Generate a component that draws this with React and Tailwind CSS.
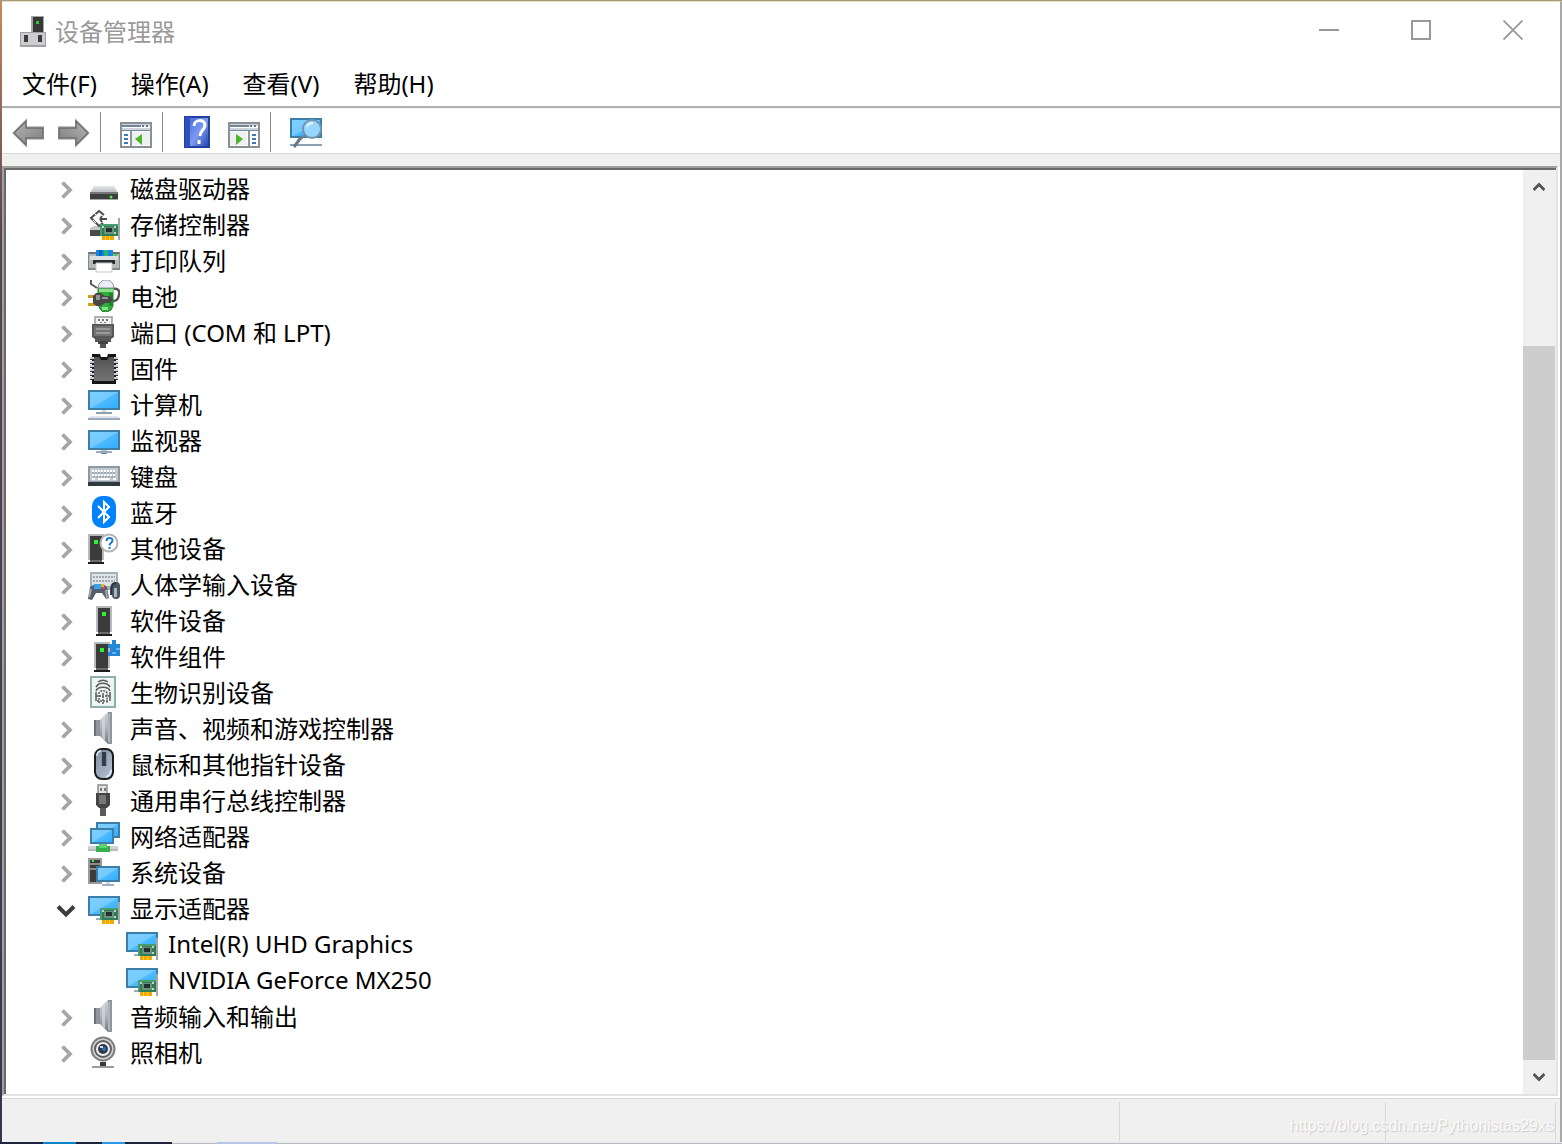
import { useState } from "react";

/* ---------- Icons ---------- */

function Icon({ children, className = "size-8 shrink-0" }) {
  return (
    <svg viewBox="0 0 32 32" className={className} aria-hidden="true">
      {children}
    </svg>
  );
}

function Gradients() {
  return (
    <svg className="absolute size-0" aria-hidden="true">
      <defs>
        <linearGradient id="screen" x1="0" y1="0" x2="1" y2="1">
          <stop offset="0" stopColor="#7fd0ff" />
          <stop offset="0.5" stopColor="#74caff" />
          <stop offset="0.52" stopColor="#4dbbff" />
          <stop offset="1" stopColor="#2fabff" />
        </linearGradient>
        <linearGradient id="steel" x1="0" y1="0" x2="0" y2="1">
          <stop offset="0" stopColor="#e6e8ea" />
          <stop offset="1" stopColor="#b4b8bc" />
        </linearGradient>
        <linearGradient id="dark" x1="0" y1="0" x2="0" y2="1">
          <stop offset="0" stopColor="#525252" />
          <stop offset="1" stopColor="#747474" />
        </linearGradient>
        <linearGradient id="cone" x1="0" y1="0" x2="0" y2="1">
          <stop offset="0" stopColor="#c9ced2" />
          <stop offset="0.5" stopColor="#aeb5bb" />
          <stop offset="1" stopColor="#6f7880" />
        </linearGradient>
        <linearGradient id="mouse" x1="0" y1="0" x2="1" y2="1">
          <stop offset="0" stopColor="#7c8ca0" />
          <stop offset="1" stopColor="#b9c7d6" />
        </linearGradient>
        <linearGradient id="arrow" x1="0" y1="0" x2="1" y2="1">
          <stop offset="0" stopColor="#b5b5b5" />
          <stop offset="1" stopColor="#7d7d7d" />
        </linearGradient>
        <linearGradient id="book" x1="0" y1="0" x2="1" y2="1">
          <stop offset="0" stopColor="#4a72e0" />
          <stop offset="0.5" stopColor="#7d9af0" />
          <stop offset="1" stopColor="#2646b4" />
        </linearGradient>
      </defs>
    </svg>
  );
}

function Screen({ x = 0, y = 2, w = 32, h = 20 }) {
  return <rect x={x + 1} y={y + 1} width={w - 2} height={h - 2} fill="url(#screen)" stroke="#3b7ea8" strokeWidth="2" />;
}

function Card() {
  return (
    <g shapeRendering="crispEdges">
      <path d="M14 28h12v4H14z" fill="#f5a800" />
      <path d="M17 28h1v4h-1zM21 28h1v4h-1z" fill="#ffd34d" />
      <path d="M12 16h18v12H12z" fill="#2f7d55" />
      <path d="M12 16h18v2H12zM12 16h2v12h-2z" fill="#4c9a72" />
      <path d="M16 19h10v7H16z" fill="#6b9080" />
      <path d="M18 20h6v4h-6z" fill="#26302c" />
      <path d="M14 18h2v2h-2zM26 18h2v2h-2zM26 24h2v2h-2z" fill="#b9d8c8" />
      <path d="M30 10h2v22h-2z" fill="#a6a6a6" />
    </g>
  );
}

function Tower({ x = 8 }) {
  return (
    <g shapeRendering="crispEdges">
      <path d={`M${x} 2h16v26h-16z`} fill="#b7babe" />
      <path d={`M${x + 2} 4h12v24h-12z`} fill="#3b3b3b" />
      <path d={`M${x + 2} 28h12v2h-12z`} fill="#6b6b6b" />
      <path d={`M${x} 30h16v2h-16z`} fill="#1d1d1d" />
      <path d={`M${x + 6} 8h4v4h-4z`} fill="#2df52d" />
    </g>
  );
}

function DiskIcon() {
  return (
    <Icon>
      <path d="M6 14h20l4 7H2z" fill="url(#steel)" />
      <path d="M2 20h28v8H2z" fill="#3d3d3d" />
      <path d="M2 20h28v2H2z" fill="#777" />
      <path d="M2 27h28v1H2z" fill="#a5a5a5" />
      <circle cx="23" cy="25" r="1.5" fill="#3df53d" />
    </Icon>
  );
}

function StorageIcon() {
  return (
    <Icon>
      <path d="M2 20l4-2h8v4H2z" fill="#c5c8ca" />
      <path d="M2 22h10v6H2z" fill="#4a4a4a" />
      <path d="M16 7l-5-4-8 7 8 8 4-3M12 11h7M12 11l2-3M12 11l2 3" fill="none" stroke="#4b4b4b" strokeWidth="2" />
      <path d="M6 5l3 3M5 12l3 3" stroke="#fff" strokeWidth="1" />
      <Card />
    </Icon>
  );
}

function PrinterIcon() {
  return (
    <Icon>
      <path d="M8 6h17v6H8z" fill="#1686e0" />
      <path d="M16 6h4v6h-4z" fill="#22b573" />
      <path d="M11 6h3v6h-3z" fill="#0a63c4" />
      <path d="M0 8h8v4h17V8h7v18H0z" fill="#b6babd" />
      <path d="M0 8h8v2H0zM25 8h7v2h-7z" fill="#6c6f72" />
      <path d="M2 12h28v4H2z" fill="#dcdfe1" />
      <path d="M0 24h32v2H0zM0 8h1v18H0zM31 8h1v18h-1z" fill="#85898c" />
      <path d="M5 16h22v4H5z" fill="#2c2c2c" />
      <path d="M8 19h16v9H8z" fill="#fff" stroke="#c2c6c9" />
      <path d="M26 10h3v2h-3z" fill="#30e030" />
    </Icon>
  );
}

function BatteryIcon() {
  return (
    <Icon>
      <path d="M10 7h15v19l-2 4-4 2h-4l-3-3-2-5z" fill="#2fae3c" stroke="#287a30" strokeWidth="1" />
      <path d="M10 8l1-4 4-4h6l4 4 1 4z" fill="#eceef8" stroke="#8a8ca0" strokeWidth="1" />
      <path d="M11 9h14v3H11z" fill="#8fe08a" />
      <path d="M21 13h4v13h-4z" fill="#1d8a2a" />
      <path d="M14 27h6v3h-6z" fill="#8fe08a" />
      <path d="M3 0v4l6 4" fill="none" stroke="#5a5a5a" strokeWidth="2" />
      <path d="M26 9c4-1 6 2 5 6s-2 6-6 6" fill="none" stroke="#555" strokeWidth="2.500" />
      <path d="M0 15h7v3H0zM0 23h7v3H0z" fill="#d09c1a" />
      <path d="M5 16l3-3h5l4 3h5l3 3-3 4h-5l-4 3H8l-3-3z" fill="#484848" />
      <path d="M8 15h4v5H8zM14 17h6v2h-6z" fill="#959595" />
    </Icon>
  );
}

function PortIcon() {
  return (
    <Icon>
      <path d="M7 1h17v8H7z" fill="#f2f2f2" stroke="#9a9a9a" strokeWidth="1.5" />
      <path d="M10 3h2v2h-2zM14 3h2v2h-2zM18 3h2v2h-2zM12 6h2v1h-2zM16 6h2v1h-2z" fill="#777" />
      <path d="M4 8h22v13l-3 2v3H7v-3l-3-2z" fill="#585858" />
      <path d="M6 10h18v10H6z" fill="#747474" />
      <path d="M8 12h14v2H8zM8 16h14v2H8z" fill="#9a9a9a" />
      <path d="M10 25h10v3H10z" fill="#444" />
      <path d="M12 28h6v4h-6z" fill="#555" />
    </Icon>
  );
}

function FirmwareIcon() {
  const pins = [5, 9, 13, 17, 21, 25];
  return (
    <Icon>
      <path d="M4 2h8l1 3h6l1-3h8v30H4z" fill="#151515" />
      <path d="M6 5h5l2 3h6l2-3h5v24H6z" fill="url(#dark)" />
      {pins.map((y) => (
        <g key={y}>
          <path d={`M2 ${y}h4v2h-4zM26 ${y}h4v2h-4z`} fill="#c8d0dc" />
          <path d={`M2 ${y + 2}h3v1h-3zM27 ${y + 2}h3v1h-3z`} fill="#333" />
        </g>
      ))}
    </Icon>
  );
}

function ComputerIcon() {
  return (
    <Icon>
      <Screen />
      <path d="M14 22h4v2h-4z" fill="#d5dbe2" />
      <path d="M8 24h16v2H8z" fill="#8ea1b3" />
      <path d="M2 28h28l2 2H0z" fill="#e0e4e8" />
      <path d="M0 30h32v2H0z" fill="#9aaabb" />
    </Icon>
  );
}

function MonitorIcon() {
  return (
    <Icon>
      <Screen y={6} />
      <path d="M13 26h6v3h-6z" fill="#b8c4d0" />
      <path d="M8 27h16v2H8z" fill="#9aabbc" />
      <path d="M13 29h6v1h-6z" fill="#71879c" />
    </Icon>
  );
}

function KeyboardIcon() {
  return (
    <Icon>
      <path d="M0 6h32v17H0z" fill="#8d99a5" />
      <path d="M2 8h28v13H2z" fill="#c3cad1" />
      <path d="M4 11h24M4 15h24" stroke="#fff" strokeWidth="2" strokeDasharray="2 1" />
      <path d="M4 13h24M5 17h22" stroke="#7d8791" strokeWidth="1" strokeDasharray="2 1" />
      <path d="M4 19h3M10 19h12M25 19h3" stroke="#fff" strokeWidth="2" />
      <path d="M0 22h32v4H0z" fill="#2f3a40" />
    </Icon>
  );
}

function BluetoothIcon() {
  return (
    <Icon>
      <rect x="4" y="0" width="24" height="32" rx="10" fill="#0082fc" />
      <path d="M10 10l11 11-5 5V6l5 5-11 11" fill="none" stroke="#fff" strokeWidth="2" />
    </Icon>
  );
}

function UnknownIcon() {
  return (
    <Icon>
      <Tower x={0} />
      <circle cx="21" cy="11" r="8.500" fill="#fff" stroke="#b4b4b4" strokeWidth="2" />
      <path d="M18.500 9c0-4 6-4 6-.5 0 2-3 2.500-3 5M21.500 15v2" fill="none" stroke="#1e78c8" strokeWidth="2" />
    </Icon>
  );
}

function HidIcon() {
  return (
    <Icon>
      <path d="M2 4h28v18H2z" fill="#a4afb9" />
      <path d="M4 6h24v12H4z" fill="#dfe4e8" />
      <path d="M5 9h22M5 13h22" stroke="#8a959f" strokeWidth="1.500" strokeDasharray="2 1" />
      <path d="M0 31l2-12 5-3h8l4 3 2 11-3 1-4-6H8l-4 7z" fill="#54606c" />
      <path d="M1 29l2-8M18 22l1 8" stroke="#9facb8" strokeWidth="2" />
      <path d="M6 16h7v5H6z" fill="#35a2f0" />
      <path d="M13 16h3v3h-3z" fill="#f0b020" />
      <path d="M14 19h3v2h-3z" fill="#e04848" />
      <rect x="24" y="14" width="8" height="17" rx="4" fill="#4a545e" />
      <path d="M26 20h3v9h-3z" fill="#a9b5c0" />
      <path d="M28 15c-4 0-5 2-5 12" fill="none" stroke="#2f363c" strokeWidth="2" />
    </Icon>
  );
}

function SoftwareDeviceIcon() {
  return (
    <Icon>
      <Tower x={8} />
    </Icon>
  );
}

function SoftwareComponentIcon() {
  return (
    <Icon>
      <Tower x={6} />
      <path d="M20 4h4V0h4v4h4v12H20v-4h2V8h-2z" fill="#2387d6" />
      <path d="M24 12h4v2h-4zM28 8h4v2h-4z" fill="#65b0ee" />
    </Icon>
  );
}

function FingerprintIcon() {
  return (
    <Icon>
      <path d="M2 0h26v32H2z" fill="#8fb0aa" />
      <path d="M4 2h22v28H4z" fill="#eef5f3" />
      <g fill="none" stroke="#5a5a5a" strokeWidth="1.500">
        <path d="M10 6c3-2 7-2 10 0M8 11c3-5 11-5 14 0M8 15c2-5 12-5 14 0M8 16v9M22 16v9" />
        <path d="M11 27V17c1-3 7-3 8 0v10M15 28V17M8 20h14M9 25h12" strokeDasharray="2 1" />
      </g>
    </Icon>
  );
}

function SpeakerIcon() {
  return (
    <Icon>
      <path d="M6 8h6v16H6z" fill="#69737c" />
      <path d="M8 8h4v16H8z" fill="#8d97a0" />
      <path d="M12 8l8-8v32l-8-8z" fill="url(#cone)" />
      <path d="M14 6l3-3v26l-3-3z" fill="#d9dcdf" opacity="0.7" />
      <path d="M20 0h4v32h-4z" fill="#8d979f" />
      <path d="M20 2h2v28h-2z" fill="#adb5bb" />
    </Icon>
  );
}

function MouseIcon() {
  return (
    <Icon>
      <rect x="7" y="1" width="18" height="30" rx="7" fill="url(#mouse)" stroke="#1c1c1c" strokeWidth="2" />
      <path d="M9 8c0-4 2-5 4-5M23 22c0 4-2 6-5 7" fill="none" stroke="#e5ecf3" strokeWidth="1.500" />
      <path d="M13 2h6v16h-6z" fill="#8593a4" />
      <path d="M14 4h4v14h-4z" fill="#343c45" />
    </Icon>
  );
}

function UsbIcon() {
  return (
    <Icon>
      <path d="M10 1h9v9h-9z" fill="#e3e3e3" stroke="#8d8d8d" strokeWidth="1.500" />
      <path d="M12 4h2v3h-2zM16 4h2v3h-2z" fill="#777" />
      <path d="M8 9h14v12l-3 3h-8l-3-3z" fill="#454545" />
      <path d="M11 11h7v9h-7z" fill="#777" />
      <path d="M12 24h6v8h-6z" fill="#5a5a5a" />
    </Icon>
  );
}

function NetworkIcon() {
  return (
    <Icon>
      <Screen x={8} y={2} w={24} h={16} />
      <Screen x={2} y={8} w={24} h={16} />
      <path d="M0 26h30v4H0z" fill="#d0d3d5" />
      <path d="M0 29h30v2H0z" fill="#b8bbbd" />
      <path d="M8 26h14v6H8z" fill="#35b04a" />
      <path d="M11 24h8v4h-8z" fill="#5fcf70" />
    </Icon>
  );
}

function SystemIcon() {
  return (
    <Icon>
      <path d="M0 2h14v26H0z" fill="#9a9a9a" />
      <path d="M2 4h10v22H2z" fill="#3c3c3c" />
      <path d="M2 7h10v2H2zM2 12h6v2H2z" fill="#8b8b8b" />
      <path d="M4 4h2v2H4z" fill="#30f030" />
      <Screen x={8} y={10} w={24} h={16} />
      <path d="M18 26h4v2h-4z" fill="#cfd6dd" />
      <path d="M14 28h12v2H14z" fill="#9db0c2" />
    </Icon>
  );
}

function DisplayIcon() {
  return (
    <Icon>
      <Screen y={4} />
      <path d="M8 26h6v2H8z" fill="#9aabbc" />
      <Card />
    </Icon>
  );
}

function CameraIcon() {
  return (
    <Icon>
      <path d="M12 26h6v4h-6z" fill="#3b3b3b" />
      <path d="M4 30h22v2H4z" fill="#9b9b9b" />
      <circle cx="15" cy="13" r="11.500" fill="#d2d4d6" stroke="#7d7d7d" strokeWidth="2" />
      <circle cx="15" cy="13" r="8" fill="#f0f0f0" stroke="#5f5f5f" strokeWidth="2" />
      <circle cx="15" cy="13" r="5" fill="#303a48" />
      <circle cx="16" cy="13" r="2" fill="#2873b8" />
      <path d="M12 10h3v2h-3z" fill="#c8dcf0" />
    </Icon>
  );
}

function AppIcon() {
  return (
    <Icon>
      <path d="M13 0h13v17H13z" fill="#a5a5a5" />
      <path d="M15 1h10v16H15z" fill="#383838" />
      <path d="M18 5h3v3h-3z" fill="#2ec42e" />
      <path d="M2 16h26v15H2z" fill="#cbcdd1" />
      <path d="M2 16h26v1H2zM2 29h26v2H2zM2 16h1v15H2zM27 16h1v15h-1z" fill="#a0a0a0" />
      <path d="M6 19h4v7H6zM20 19h4v7h-4z" fill="#3c3c3c" />
    </Icon>
  );
}

function ArrowIcon({ flip }) {
  return (
    <Icon className={flip ? "size-8 -scale-x-100" : "size-8"}>
      <path d="M0 17L15 2v8h17v14H15v8z" fill="#c4c4c4" />
      <path d="M2 17L14 5v7h17v10H14v7z" fill="url(#arrow)" stroke="#6c6c6c" strokeWidth="1.500" />
    </Icon>
  );
}

function PaneIcon({ right }) {
  return (
    <Icon>
      <path d="M1 7h30v24H1z" fill="#fff" stroke="#8a8f94" strokeWidth="2" />
      <path d="M2 8h28v2H2zM2 12h28v3H2z" fill="#cdd3d9" />
      <path d="M2 9h19v2H2zM2 14h28v1H2z" fill="#72879c" />
      <path d="M22 9h2v2h-2zM26 9h2v2h-2z" fill="#5f788f" />
      {right ? (
        <g>
          <path d="M2 16h17v13H2z" fill="#eef0f2" />
          <path d="M20 15h2v15h-2z" fill="#8e979f" />
          <path d="M24 18h4v2h-4zM24 22h4v2h-4zM24 26h4v2h-4z" fill="#3f78b5" />
          <path d="M8 18l7 5-7 6z" fill="#4cb52a" />
        </g>
      ) : (
        <g>
          <path d="M12 16h18v13H12z" fill="#eef0f2" />
          <path d="M10 15h2v15h-2z" fill="#8e979f" />
          <path d="M4 18h4v2H4zM4 22h4v2H4zM4 26h4v2H4z" fill="#3f78b5" />
          <path d="M22 18l-7 5 7 6z" fill="#4cb52a" />
        </g>
      )}
    </Icon>
  );
}

function HelpIcon() {
  return (
    <Icon>
      <path d="M2 0h26v32H2z" fill="#2140a0" />
      <path d="M3 1h5v30H3z" fill="#3050b8" />
      <path d="M8 2h18v28H8z" fill="url(#book)" />
      <path d="M12 10c0-7 11-7 11-1 0 5-5 5-5 11M17 24v4" fill="none" stroke="#fff" strokeWidth="3" />
    </Icon>
  );
}

function ScanIcon() {
  return (
    <Icon>
      <Screen y={2} />
      <path d="M0 28h32v2H0z" fill="#8ba0b4" />
      <path d="M12 20l-8 11" stroke="#66788a" strokeWidth="3" />
      <circle cx="22" cy="13" r="9" fill="#a6dcff" fillOpacity="0.85" stroke="#7594ac" strokeWidth="2" />
      <path d="M15 19l-4 4" stroke="#6c8396" strokeWidth="2" />
      <path d="M17 11c1-3 3-4 6-4" fill="none" stroke="#e2f4ff" strokeWidth="2" />
    </Icon>
  );
}

/* ---------- Data ---------- */

const menus = ["文件(F)", "操作(A)", "查看(V)", "帮助(H)"];

const categories = [
  { name: "磁盘驱动器", icon: DiskIcon },
  { name: "存储控制器", icon: StorageIcon },
  { name: "打印队列", icon: PrinterIcon },
  { name: "电池", icon: BatteryIcon },
  { name: "端口 (COM 和 LPT)", icon: PortIcon },
  { name: "固件", icon: FirmwareIcon },
  { name: "计算机", icon: ComputerIcon },
  { name: "监视器", icon: MonitorIcon },
  { name: "键盘", icon: KeyboardIcon },
  { name: "蓝牙", icon: BluetoothIcon },
  { name: "其他设备", icon: UnknownIcon },
  { name: "人体学输入设备", icon: HidIcon },
  { name: "软件设备", icon: SoftwareDeviceIcon },
  { name: "软件组件", icon: SoftwareComponentIcon },
  { name: "生物识别设备", icon: FingerprintIcon },
  { name: "声音、视频和游戏控制器", icon: SpeakerIcon },
  { name: "鼠标和其他指针设备", icon: MouseIcon },
  { name: "通用串行总线控制器", icon: UsbIcon },
  { name: "网络适配器", icon: NetworkIcon },
  { name: "系统设备", icon: SystemIcon },
  { name: "显示适配器", icon: DisplayIcon, devices: ["Intel(R) UHD Graphics", "NVIDIA GeForce MX250"] },
  { name: "音频输入和输出", icon: SpeakerIcon },
  { name: "照相机", icon: CameraIcon },
];

/* ---------- Window parts ---------- */

function TitleBar() {
  return (
    <header className="flex h-[60px] items-stretch pr-px">
      <div className="flex flex-1 items-center gap-[5px] pl-4">
        <AppIcon />
        <h1 className="text-2xl leading-9 text-[#999999]">设备管理器</h1>
      </div>
      <button aria-label="最小化" className="flex w-[92px] items-center justify-center pb-1">
        <span className="h-0.5 w-5 bg-[#999999]" />
      </button>
      <button aria-label="最大化" className="flex w-[92px] items-center justify-center pb-1">
        <span className="size-5 border-2 border-[#999999]" />
      </button>
      <button aria-label="关闭" className="flex w-[92px] items-center justify-center pb-1">
        <svg viewBox="0 0 20 20" className="size-5" aria-hidden="true">
          <path d="M0.500 0.500l19 19M19.500 0.500l-19 19" stroke="#999999" strokeWidth="1.800" />
        </svg>
      </button>
    </header>
  );
}

function MenuBar() {
  return (
    <nav className="flex h-[46px] items-center gap-0.5 border-b-2 border-[#b0b0b0] pl-1">
      {menus.map((m) => (
        <button key={m} className="px-4 text-2xl leading-9">
          {m}
        </button>
      ))}
    </nav>
  );
}

function ToolBar() {
  return (
    <div role="toolbar" className="flex h-[46px] items-center border-t border-b border-t-[#f0f5fa] border-b-[#d9d9d9] pt-0.5">
      <div className="flex gap-[14px] px-[10px]">
        <button aria-label="后退"><ArrowIcon /></button>
        <button aria-label="前进"><ArrowIcon flip /></button>
      </div>
      <div className="h-10 w-px bg-[#8d8d8d]" />
      <div className="flex gap-[14px] pr-[10px] pl-[19px]">
        <button aria-label="显示/隐藏控制台树"><PaneIcon /></button>
      </div>
      <div className="h-10 w-px bg-[#8d8d8d]" />
      <div className="flex gap-[14px] pr-[10px] pl-[19px]">
        <button aria-label="帮助"><HelpIcon /></button>
        <button aria-label="显示/隐藏操作窗格"><PaneIcon right /></button>
      </div>
      <div className="h-10 w-px bg-[#8d8d8d]" />
      <div className="flex gap-[14px] pr-[10px] pl-[19px]">
        <button aria-label="扫描检测硬件改动"><ScanIcon /></button>
      </div>
    </div>
  );
}

function Category({ name, icon: CategoryIcon, devices = [] }) {
  const [open, setOpen] = useState(devices.length > 0);

  return (
    <li>
      <div className="flex h-9 items-start">
        <button aria-label={name} aria-expanded={open} onClick={() => setOpen(!open)} className="mr-3 flex h-9 w-5 items-center justify-center">
          {open ? (
            <svg viewBox="0 0 20 20" className="size-5" aria-hidden="true">
              <path d="M2 6.500l8 8 8-8" fill="none" stroke="#3c3c3c" strokeWidth="4" />
            </svg>
          ) : (
            <svg viewBox="0 0 20 20" className="size-5" aria-hidden="true">
              <path d="M6.500 2.500L14 10l-7.500 7.500" fill="none" stroke="#a6a6a6" strokeWidth="3.800" />
            </svg>
          )}
        </button>
        <CategoryIcon />
        <span className="pl-[10px] text-2xl leading-[34px]">{name}</span>
      </div>
      {open && devices.length > 0 && (
        <ul>
          {devices.map((d) => (
            <li key={d} className="flex h-9 items-start pl-[70px]">
              <CategoryIcon />
              <span className="pl-[10px] text-2xl leading-8">{d}</span>
            </li>
          ))}
        </ul>
      )}
    </li>
  );
}

function ScrollBar() {
  return (
    <div className="flex w-[33px] flex-col bg-[#f0f0f0] pr-px">
      <button aria-label="向上滚动" className="flex h-[34px] items-center justify-center">
        <svg viewBox="0 0 12 10" className="h-[10px] w-3" aria-hidden="true">
          <path d="M0.500 8L6 2.500 11.500 8" fill="none" stroke="#555" strokeWidth="3" />
        </svg>
      </button>
      <div className="flex flex-1 flex-col">
        <div className="flex-[142]" />
        <div className="flex-[714] bg-[#cdcdcd]" />
      </div>
      <button aria-label="向下滚动" className="flex h-[34px] items-center justify-center">
        <svg viewBox="0 0 12 10" className="h-[10px] w-3" aria-hidden="true">
          <path d="M0.500 2L6 7.500 11.500 2" fill="none" stroke="#555" strokeWidth="3" />
        </svg>
      </button>
    </div>
  );
}

function StatusBar() {
  return (
    <footer className="relative flex h-11 border-t border-[#d7d7d7] bg-[#f0f0f0] pt-[3px] pr-1 pb-px">
      <div className="flex-1 border-r border-[#d7d7d7]" />
      <div className="w-[266px] border-r border-[#d7d7d7]" />
      <div className="w-[170px] border-r border-[#d7d7d7]" />
      <p className="absolute right-1.5 bottom-1 font-['Liberation_Sans',sans-serif] text-base leading-6 text-[#fafafa] [text-shadow:1px_1px_1px_#c8c8c8]">
        https://blog.csdn.net/Pythonistas29xs
      </p>
    </footer>
  );
}

export default function App() {
  return (
    <div className="flex min-h-screen flex-col border-t border-[#a09a86] bg-white font-['Noto_Sans','Noto_Sans_CJK_SC',sans-serif] text-black">
      <Gradients />
      <div className="flex flex-1">
        <div className="w-0.5 bg-linear-to-b from-[#c98a5a] via-[#5a4452] via-20% to-[#35374f]" />
        <div className="flex flex-1 flex-col border-t border-r-2 border-t-[#f0dfae] border-r-[#a9a9a9]">
          <TitleBar />
          <MenuBar />
          <ToolBar />
          <div className="h-3 bg-[#f0f0f0]" />
          <main className="mr-0.5 mb-0.5 flex flex-1 border-2 border-t-[#a0a0a0] border-r-[#e3e3e3] border-b-[#e3e3e3] border-l-[#a0a0a0]">
            <div className="flex flex-1 border-t-2 border-l-2 border-[#696969]">
              <ul className="flex-1 pt-0.5 pl-[50px]">
                {categories.map((c) => (
                  <Category key={c.name} {...c} />
                ))}
              </ul>
              <ScrollBar />
            </div>
          </main>
          <StatusBar />
        </div>
      </div>
      {/* taskbar showing below the window edge */}
      <div className="flex h-0.5 bg-linear-to-b from-white to-[#a3a8b0]">
        <div className="w-[43px] bg-[#20233c]" />
        <div className="w-[33px] bg-[#0a84c8]" />
        <div className="w-[26px] bg-[#20233c]" />
        <div className="w-[23px] bg-[#2a9ae8]" />
        <div className="w-[47px] bg-[#20233c]" />
        <div className="ml-[45px] w-[60px] bg-[#b9c4ea]" />
      </div>
    </div>
  );
}
